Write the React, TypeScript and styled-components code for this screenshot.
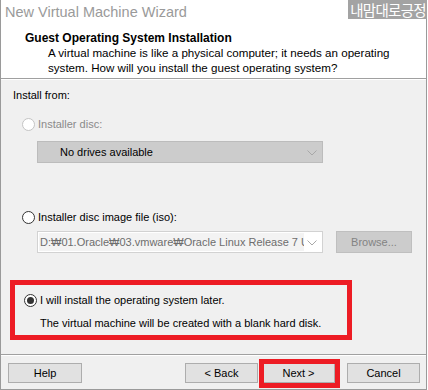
import React from "react";
import styled, { createGlobalStyle } from "styled-components";

const Global = createGlobalStyle`
  html, body { margin: 0; padding: 0; background: #ffffff; }
  body { width: 428px; height: 390px; overflow: hidden; font-family: "Liberation Sans", Arial, sans-serif; }
  * { box-sizing: border-box; }
`;

const Window = styled.div`
  position: relative;
  width: 427px;
  height: 390px;
  display: flex;
  flex-direction: column;
  border-left: 1px solid #9a9a9a;
  border-right: 1px solid #9a9a9a;
  border-bottom: 1px solid #9a9a9a;
  background: #f0f0f0;
`;

const TitleBar = styled.div`
  height: 25px;
  flex: none;
  background: #ffffff;
  color: #9a9a9a;
  font-size: 14.5px;
  line-height: 25px;
  padding-left: 4px;
`;

const Watermark = styled.div`
  position: absolute;
  top: 0;
  right: -1px;
  height: 19px;
  padding: 0 1px 0 2px;
  background: #a3a3a3;
  color: #ffffff;
  font-family: "Noto Sans CJK KR", sans-serif;
  font-size: 14.5px;
  line-height: 19px;
  letter-spacing: -0.7px;
`;

const Header = styled.div`
  flex: none;
  height: 54px;
  background: #ffffff;
  border-bottom: 1px solid #a0a0a0;
  box-shadow: 0 1px 0 #ffffff;
  padding: 5px 0 0 24px;
`;

const HeaderTitle = styled.div`
  font-weight: bold;
  font-size: 12px;
  line-height: 16px;
  color: #000;
`;

const HeaderDesc = styled.div`
  font-size: 11.6px;
  line-height: 14.5px;
  color: #000;
  padding-left: 23px;
`;

const Content = styled.div`
  flex: 1;
  margin-top: 1px;
  padding: 8px 0 0 12px;
  display: flex;
  flex-direction: column;
`;

const Label = styled.div`
  font-size: 11px;
  line-height: 15px;
  color: #000;
`;

const RadioRow = styled.div<{ $disabled?: boolean; $mt: number }>`
  display: flex;
  align-items: center;
  gap: 3px;
  margin-top: ${(p) => p.$mt}px;
  margin-left: 9px;
  font-size: 11px;
  line-height: 15px;
  color: ${(p) => (p.$disabled ? "#8a8a8a" : "#000")};
`;

const RadioCircle = styled.span<{ $disabled?: boolean; $checked?: boolean }>`
  width: 13px;
  height: 13px;
  border-radius: 50%;
  border: 1px solid ${(p) => (p.$disabled ? "#c4c4c4" : "#333333")};
  background: #ffffff;
  display: flex;
  align-items: center;
  justify-content: center;
  flex: none;
  &::after {
    content: "";
    display: ${(p) => (p.$checked ? "block" : "none")};
    width: 7px;
    height: 7px;
    border-radius: 50%;
    background: #333333;
  }
`;

const FieldRow = styled.div<{ $mt: number }>`
  display: flex;
  align-items: center;
  margin-top: ${(p) => p.$mt}px;
  margin-left: 24px;
  gap: 13px;
`;

const Combo = styled.div<{ $disabled?: boolean }>`
  width: 286px;
  height: 22px;
  display: flex;
  align-items: center;
  background: ${(p) => (p.$disabled ? "#cccccc" : "#ffffff")};
  border: 1px solid ${(p) => (p.$disabled ? "#bcbcbc" : "#d2d2d2")};
  padding: 0 0 0 1px;
  position: relative;
`;

const ComboText = styled.div<{ $indent: number; $muted?: boolean; $highlight?: boolean }>`
  flex: 1;
  height: 18px;
  line-height: 18px;
  padding-left: ${(p) => p.$indent}px;
  font-size: 11px;
  color: ${(p) => (p.$muted ? "#6d6d6d" : "#000")};
  background: ${(p) => (p.$highlight ? "#f3f3f3" : "transparent")};
  white-space: nowrap;
  overflow: hidden;
  margin-right: 18px;
`;

const Chevron = styled.svg`
  position: absolute;
  right: 5px;
  top: 8px;
`;

const Button = styled.div<{ $disabled?: boolean; $w?: number }>`
  width: ${(p) => p.$w ?? 74}px;
  height: 20px;
  display: flex;
  align-items: center;
  justify-content: center;
  font-size: 11px;
  color: ${(p) => (p.$disabled ? "#838383" : "#000")};
  background: ${(p) => (p.$disabled ? "#cccccc" : "#e1e1e1")};
  border: 1px solid ${(p) => (p.$disabled ? "#bfbfbf" : "#adadad")};
  flex: none;
`;

const BrowseButton = styled(Button)`
  height: 22px;
  width: 76px;
`;

const Highlight = styled.div`
  margin-top: 27px;
  margin-left: -3px;
  width: 342px;
  height: 60px;
  border: 5px solid #ed1c24;
  padding-top: 8px;
`;

const SubText = styled.div`
  font-size: 11px;
  line-height: 15px;
  color: #000;
  margin-left: 25px;
  margin-top: 8px;
`;

const Footer = styled.div`
  flex: none;
  height: 35px;
  border-top: 1px solid #a0a0a0;
  box-shadow: inset 0 1px 0 #ffffff;
  display: flex;
  align-items: flex-start;
  padding: 8px 6px 0 7px;
`;

const Spacer = styled.div`
  flex: 1;
`;

const NextWrap = styled.div`
  position: relative;
  margin-left: 4px;
  margin-right: 12px;
  &::after {
    content: "";
    position: absolute;
    left: -3px;
    top: -4px;
    right: -5px;
    bottom: -5px;
    border: 5px solid #ed1c24;
    pointer-events: none;
  }
`;

const ChevronIcon = () => (
  <Chevron width="10" height="6" viewBox="0 0 10 6">
    <polyline points="0.5,0.5 5,5 9.5,0.5" fill="none" stroke="#a8a8a8" strokeWidth="1" />
  </Chevron>
);

export default function App() {
  return (
    <>
      <Global />
      <Window>
        <TitleBar>New Virtual Machine Wizard</TitleBar>
        <Watermark>내맘대로긍정</Watermark>
        <Header>
          <HeaderTitle>Guest Operating System Installation</HeaderTitle>
          <HeaderDesc>
            A virtual machine is like a physical computer; it needs an operating
            <br />
            system. How will you install the guest operating system?
          </HeaderDesc>
        </Header>
        <Content>
          <Label>Install from:</Label>
          <RadioRow $disabled $mt={14}>
            <RadioCircle $disabled />
            Installer disc:
          </RadioRow>
          <FieldRow $mt={9}>
            <Combo $disabled>
              <ComboText $indent={21}>No drives available</ComboText>
              <ChevronIcon />
            </Combo>
          </FieldRow>
          <RadioRow $mt={47}>
            <RadioCircle />
            Installer disc image file (iso):
          </RadioRow>
          <FieldRow $mt={6}>
            <Combo>
              <ComboText $indent={1} $muted $highlight>
                D:₩01.Oracle₩03.vmware₩Oracle Linux Release 7 U
              </ComboText>
              <ChevronIcon />
            </Combo>
            <BrowseButton $disabled>Browse...</BrowseButton>
          </FieldRow>
          <Highlight>
            <RadioRow $mt={0}>
              <RadioCircle $checked />
              I will install the operating system later.
            </RadioRow>
            <SubText>The virtual machine will be created with a blank hard disk.</SubText>
          </Highlight>
        </Content>
        <Footer>
          <Button>Help</Button>
          <Spacer />
          <Button $w={73}>&lt; Back</Button>
          <NextWrap>
            <Button $w={73}>Next &gt;</Button>
          </NextWrap>
          <Button $w={73}>Cancel</Button>
        </Footer>
      </Window>
    </>
  );
}
